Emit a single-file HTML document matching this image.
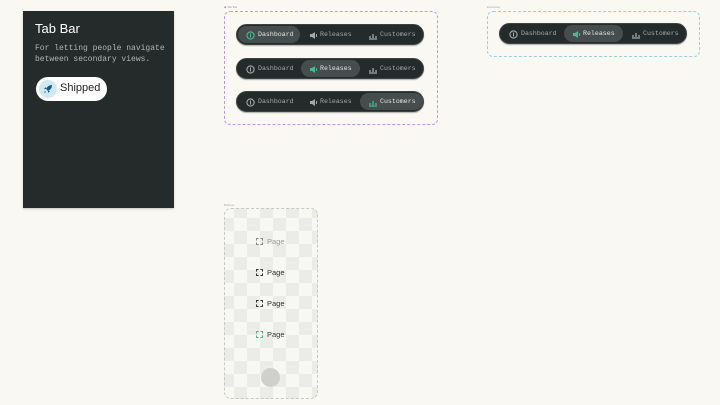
<!DOCTYPE html>
<html><head><meta charset="utf-8"><style>
*{margin:0;padding:0;box-sizing:border-box}
body{width:720px;height:405px;background:#f9f8f2;position:relative;overflow:hidden;font-family:"Liberation Mono",monospace}
.abs{position:absolute}
.card{left:23px;top:11px;width:151px;height:197px;background:#252a2b;box-shadow:0 1px 2px rgba(0,0,0,.2)}
.bar{position:absolute;width:188px;height:21px;background:#252a2b;border-radius:11px;border:1px solid #3d4344;box-shadow:0 1px 1px rgba(0,0,0,.3)}
.tab{position:absolute;top:1px;height:17px;border-radius:9px;color:#a4a9a8;font-size:6.6px;line-height:17px;white-space:nowrap}
.tab.on{background:#474d4c;color:#e3e6e4}
.tab svg{position:absolute;top:4.5px}
.tab span{position:absolute;top:0}
.lbl{font-family:"Liberation Sans",sans-serif;font-size:3px;color:#9a8ee0}
.pg{font-size:7.5px;font-family:'Liberation Sans',sans-serif}
</style></head><body>

<div class="abs card">
  <div class="abs" style="left:12px;top:10px;color:#fff;font-family:'Liberation Sans',sans-serif;font-size:13px">Tab Bar</div>
  <div class="abs" style="left:12px;top:32px;color:#b2b6b4;font-size:8px;line-height:11px;width:140px;white-space:nowrap">For letting people navigate<br>between secondary views.</div>
  <div class="abs" style="left:13px;top:66px;width:71px;height:24px;background:#fff;border-radius:12px">
    <div class="abs" style="left:3px;top:3px;width:18px;height:18px;border-radius:9px;background:#cfe8f3"></div>
    <svg class="abs" style="left:7px;top:7px" width="10" height="10" viewBox="0 0 10 10"><path d="M9 1 C6 1 4 3 3 5 L5 7 C7 6 9 4 9 1Z" fill="#0f5a85"/><path d="M3 5 L1 5 L3 3 Z M5 7 L5 9 L7 7Z M2 7 L1 9 L3 8Z" fill="#0f5a85"/></svg>
    <div class="abs" style="left:24px;top:5px;font-family:'Liberation Sans',sans-serif;font-size:11px;color:#222">Shipped</div>
  </div>
</div>

<div class="abs lbl" style="left:224px;top:5px">◆ Tab Bar</div>
<div class="abs" style="left:224px;top:11px;width:214px;height:114px;border:1px dashed #b99af0;border-radius:6px"></div>

<div class="bar" style="left:236px;top:24px">
 <div class="tab on" style="left:1px;width:62px"><svg width="9" height="9" viewBox="0 0 9 9" style="left:8px"><circle cx="4.5" cy="4.5" r="3.6" fill="none" stroke="#3fbf8f" stroke-width="1.1"/><path d="M4.5 2.5V6.5" stroke="#3fbf8f" stroke-width="1"/></svg><span style="left:20px">Dashboard</span></div>
 <div class="tab" style="left:65px;width:58px"><svg width="10" height="9" viewBox="0 0 10 9" style="left:7px"><path d="M1 3h2l3-2v7L3 6H1z" fill="#a4a9a8"/><path d="M7.5 3v3" stroke="#a4a9a8"/></svg><span style="left:18px">Releases</span></div>
 <div class="tab" style="left:124px;width:62px"><svg width="10" height="9" viewBox="0 0 10 9" style="left:7px"><path d="M1 8h8M2 7V5M5 7V3M8 7V5" stroke="#a4a9a8" stroke-width="1.3"/></svg><span style="left:19px">Customers</span></div>
</div>
<div class="bar" style="left:236px;top:58px">
 <div class="tab" style="left:1px;width:62px"><svg width="9" height="9" viewBox="0 0 9 9" style="left:8px"><circle cx="4.5" cy="4.5" r="3.6" fill="none" stroke="#a4a9a8" stroke-width="1.1"/><path d="M4.5 2.5V6.5" stroke="#a4a9a8"/></svg><span style="left:20px">Dashboard</span></div>
 <div class="tab on" style="left:64px;width:59px"><svg width="10" height="9" viewBox="0 0 10 9" style="left:8px"><path d="M1 3h2l3-2v7L3 6H1z" fill="#3fbf8f"/><path d="M7.5 3v3" stroke="#3fbf8f"/></svg><span style="left:19px">Releases</span></div>
 <div class="tab" style="left:124px;width:62px"><svg width="10" height="9" viewBox="0 0 10 9" style="left:7px"><path d="M1 8h8M2 7V5M5 7V3M8 7V5" stroke="#a4a9a8" stroke-width="1.3"/></svg><span style="left:19px">Customers</span></div>
</div>
<div class="bar" style="left:236px;top:91px">
 <div class="tab" style="left:1px;width:62px"><svg width="9" height="9" viewBox="0 0 9 9" style="left:8px"><circle cx="4.5" cy="4.5" r="3.6" fill="none" stroke="#a4a9a8" stroke-width="1.1"/><path d="M4.5 2.5V6.5" stroke="#a4a9a8"/></svg><span style="left:20px">Dashboard</span></div>
 <div class="tab" style="left:65px;width:58px"><svg width="10" height="9" viewBox="0 0 10 9" style="left:7px"><path d="M1 3h2l3-2v7L3 6H1z" fill="#a4a9a8"/><path d="M7.5 3v3" stroke="#a4a9a8"/></svg><span style="left:18px">Releases</span></div>
 <div class="tab on" style="left:123px;width:63px"><svg width="10" height="9" viewBox="0 0 10 9" style="left:8px"><path d="M1 8h8M2 7V5M5 7V3M8 7V5" stroke="#3fbf8f" stroke-width="1.3"/></svg><span style="left:20px">Customers</span></div>
</div>

<div class="abs lbl" style="left:487px;top:5px;color:#aaa">Examples</div>
<div class="abs" style="left:487px;top:11px;width:213px;height:46px;border:1px dashed #8fd3ea;border-radius:6px"></div>
<div class="bar" style="left:499px;top:23px">
 <div class="tab" style="left:1px;width:62px"><svg width="9" height="9" viewBox="0 0 9 9" style="left:8px"><circle cx="4.5" cy="4.5" r="3.6" fill="none" stroke="#a4a9a8" stroke-width="1.1"/><path d="M4.5 2.5V6.5" stroke="#a4a9a8"/></svg><span style="left:20px">Dashboard</span></div>
 <div class="tab on" style="left:64px;width:59px"><svg width="10" height="9" viewBox="0 0 10 9" style="left:8px"><path d="M1 3h2l3-2v7L3 6H1z" fill="#3fbf8f"/><path d="M7.5 3v3" stroke="#3fbf8f"/></svg><span style="left:19px">Releases</span></div>
 <div class="tab" style="left:124px;width:62px"><svg width="10" height="9" viewBox="0 0 10 9" style="left:7px"><path d="M1 8h8M2 7V5M5 7V3M8 7V5" stroke="#a4a9a8" stroke-width="1.3"/></svg><span style="left:19px">Customers</span></div>
</div>

<div class="abs lbl" style="left:224px;top:203px;color:#aaa">Buttons</div>
<div class="abs" style="left:224px;top:208px;width:94px;height:191px;border:1px dashed #c8c8c4;border-radius:7px;overflow:hidden;background:repeating-conic-gradient(#ebebe7 0 25%,#f7f7f4 0 50%) -4px -4px/26px 26px">
  <div class="abs pg" style="left:31px;top:28px;color:#999"><span style="display:inline-block;width:7px;height:7px;border:1px dashed #888;margin-right:4px;vertical-align:-1px"></span>Page</div>
  <div class="abs pg" style="left:31px;top:59px;color:#333"><span style="display:inline-block;width:7px;height:7px;border:1px dashed #333;margin-right:4px;vertical-align:-1px"></span>Page</div>
  <div class="abs pg" style="left:31px;top:90px;color:#333"><span style="display:inline-block;width:7px;height:7px;border:1px dashed #333;margin-right:4px;vertical-align:-1px"></span>Page</div>
  <div class="abs pg" style="left:31px;top:121px;color:#333"><span style="display:inline-block;width:7px;height:7px;border:1px dashed #3fbf8f;margin-right:4px;vertical-align:-1px"></span>Page</div>
  <div class="abs" style="left:36px;top:159px;width:19px;height:19px;border-radius:50%;background:#cfcfcb"></div>
</div>
</body></html>
